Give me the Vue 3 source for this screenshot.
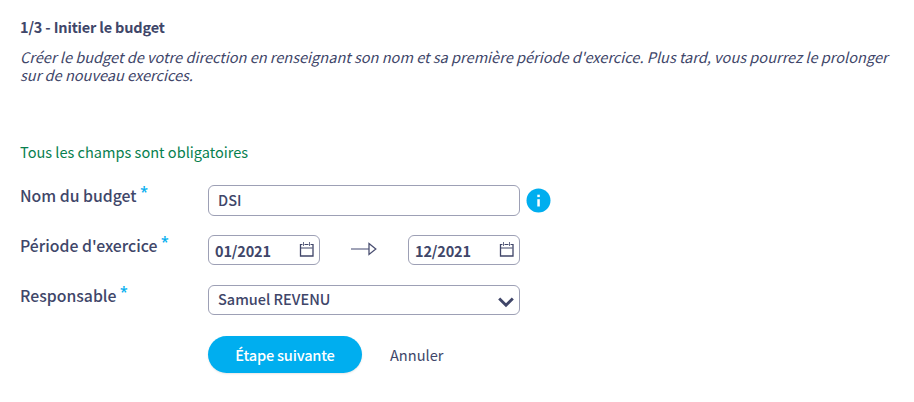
<script setup>

import { reactive } from 'vue'

const form = reactive({
  name: 'DSI',
  start: '01/2021',
  end: '12/2021',
  owner: 'Samuel REVENU'
})

const owners = ['Samuel REVENU']
</script>

<template>
  <form class="budget" @submit.prevent>
    <h1>1/3 - Initier le budget</h1>
    <p class="intro">
      Créer le budget de votre direction en renseignant son nom et sa première période d'exercice. Plus tard, vous pourrez le prolonger
      <br>
      sur de nouveau exercices.
    </p>
    <p class="required">Tous les champs sont obligatoires</p>

    <div class="row">
      <label for="name">Nom du budget <sup>*</sup></label>
      <input id="name" v-model="form.name" class="field name" type="text" spellcheck="false">
      <svg class="info" width="25" height="25" viewBox="0 0 25 25">
        <circle cx="12.5" cy="12.5" r="12" fill="#00aeef" />
        <rect x="11.3" y="6.7" width="2.5" height="2.4" fill="#fff" />
        <rect x="11.3" y="11.2" width="2.5" height="7.3" fill="#fff" />
      </svg>
    </div>

    <div class="row">
      <label for="start">Période d'exercice <sup>*</sup></label>
      <div class="field date">
        <input id="start" v-model="form.start" type="text">
        <svg width="15" height="16" viewBox="0 0 15 16" fill="none" stroke="#404669">
          <path d="M1.5 2v12h12.500V2" stroke-width="1.3" />
          <path d="M1 2.500h2.500M5.500 2.500h4M11.500 2.500h2.500M1.500 6h12" />
          <path d="M4.500 0v4M10.500 0v4" stroke-width=".8" />
        </svg>
      </div>
      <svg class="arrow" width="26" height="14" viewBox="0 0 26 14" fill="none">
        <path d="M0 7h18" stroke="#898ca5" stroke-width="1.6" />
        <path d="M18 1.500l6.800 5.500L18 12.500z" stroke="#4b5072" stroke-width="1.3" />
      </svg>
      <div class="field date">
        <input v-model="form.end" type="text">
        <svg width="15" height="16" viewBox="0 0 15 16" fill="none" stroke="#404669">
          <path d="M1.5 2v12h12.500V2" stroke-width="1.3" />
          <path d="M1 2.500h2.500M5.500 2.500h4M11.500 2.500h2.500M1.500 6h12" />
          <path d="M4.500 0v4M10.500 0v4" stroke-width=".8" />
        </svg>
      </div>
    </div>

    <div class="row">
      <label for="owner">Responsable <sup>*</sup></label>
      <div class="field owner">
        <select id="owner" v-model="form.owner">
          <option v-for="owner in owners" :key="owner">{{ owner }}</option>
        </select>
        <svg width="16" height="12" viewBox="0 0 16 12" fill="none">
          <path d="M1.2 2.5L8 9.200l6.800-6.700" stroke="#404669" stroke-width="2.9" />
        </svg>
      </div>
    </div>

    <div class="actions">
      <button class="next" type="submit">Étape suivante</button>
      <button class="cancel" type="button">Annuler</button>
    </div>
  </form>
</template>

<style>
body {
  background: #fff;
}
</style>

<style scoped>
.budget,
.budget input,
.budget select,
.budget button {
  font-family: "Noto Sans CJK SC", "Noto Sans", sans-serif;
  color: #404669;
}

.budget {
  box-sizing: border-box;
  height: 402px;
  padding: 17px 0 0 20px;
  white-space: nowrap;
}

h1 {
  margin: 0;
  font-size: 14.5px;
  line-height: 20px;
  font-weight: 700;
  letter-spacing: -0.17px;
}

.intro {
  margin: 11px 0 0;
  font-size: 14.55px;
  line-height: 18px;
  font-style: italic;
}

.required {
  margin: 57px 0 0;
  font-size: 14.55px;
  line-height: 22px;
  color: #087f4f;
}

.row {
  display: flex;
  height: 50px;
}

.required + .row {
  margin-top: 22px;
}

label {
  width: 188px;
  font-size: 15.8px;
  line-height: 22px;
  font-weight: 500;
}

sup {
  font-family: "Open Sans", sans-serif;
  font-size: 14px;
  font-weight: 600;
  line-height: 0;
  vertical-align: 5px;
  color: #00aeef;
}

.field {
  box-sizing: border-box;
  height: 30px;
  border: 1px solid #9da0b5;
  border-radius: 6px;
  background: #fff;
}

input,
select {
  padding: 0;
  border: none;
  outline: none;
  background: none;
  appearance: none;
  font-size: 14.5px;
  font-weight: 500;
}

input.name {
  width: 312px;
  height: 31px;
  padding: 0 9px 2px;
  border: 1px solid #9da0b5;
}

.info {
  margin: 3px 0 0 6px;
}

.date {
  display: flex;
  align-items: center;
  width: 112px;
  padding: 0 5px 0 6px;
}

.date input {
  flex: 1;
  min-width: 0;
  height: 28px;
  font-weight: 700;
  letter-spacing: -0.15px;
}

.arrow {
  margin: 7px 31px 0;
}

.owner {
  display: flex;
  align-items: center;
  width: 312px;
  padding: 0 5px 0 9px;
}

.owner select {
  flex: 1;
  height: 28px;
  padding-bottom: 3px;
}

.owner svg {
  margin-top: 3px;
}

.actions {
  display: flex;
  align-items: center;
  gap: 28px;
  margin: 1px 0 0 188px;
}

button {
  padding: 0;
  border: none;
  background: none;
  font-size: 14.6px;
}

.budget .next {
  width: 154px;
  height: 37px;
  border-radius: 19px;
  background: #00aeef;
  box-shadow: 0 1px 2px rgba(0, 0, 0, 0.1);
  color: #fff;
  font-weight: 500;
  letter-spacing: -0.2px;
}
</style>
